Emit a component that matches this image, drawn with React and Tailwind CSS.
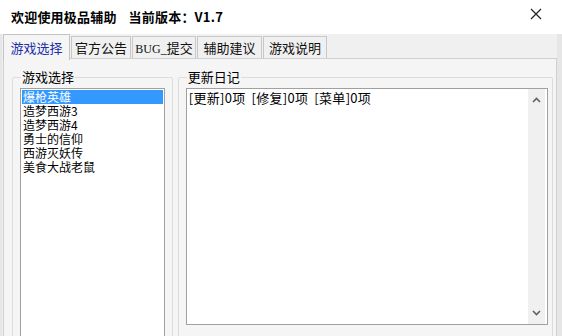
import React, { useState } from "react";

const tabs = ["游戏选择", "官方公告", "BUG_提交", "辅助建议", "游戏说明"];
const games = ["爆枪英雄", "造梦西游3", "造梦西游4", "勇士的信仰", "西游灭妖传", "美食大战老鼠"];

const App = () => {
  const [tab, setTab] = useState(0);
  const [game, setGame] = useState(0);

  return (
    <div
      className="w-[562px] h-[336px] overflow-hidden flex flex-col bg-white text-black"
      style={{ fontFamily: '"Noto Sans CJK SC", "Liberation Sans", sans-serif' }}
    >
      <div className="h-[34px] shrink-0 flex items-center pl-[11px] pr-[20px] bg-white">
        <div className="text-[13px] font-bold tracking-[0.2px] flex gap-[12px]">
          <span>欢迎使用极品辅助</span>
          <span>当前版本：V1.7</span>
        </div>
        <div className="ml-auto mt-[-6px]">
          <svg width="12" height="12" viewBox="0 0 12 12">
            <path d="M1 1 L11 11 M11 1 L1 11" stroke="#222" strokeWidth="1.2" />
          </svg>
        </div>
      </div>

      <div className="flex-1 flex flex-col bg-[#f0f0f0] border-l-[2px] border-r-[5px] border-[#e6e6e6] pl-[1px]">
        <div className="h-[24px] shrink-0 flex items-end relative z-10">
          {tabs.map((t, i) => (
            <div
              key={t}
              onClick={() => setTab(i)}
              className={
                i === tab
                  ? "h-[26px] mb-[-2px] px-[4px] flex items-center bg-[#f5f5f5] border border-b-0 border-[#c4c4c4] text-[13px] text-[#1a2fa8] w-[67px] justify-center"
                  : "h-[22px] ml-[1px] flex items-center justify-center bg-[#f0f0f0] border border-b-0 border-[#c8c8c8] text-[13px] text-[#111]"
              }
              style={i === tab ? {} : { width: [0, 60, 64, 65, 64][i] }}
            >
              {t === "BUG_提交" ? (
                <span>
                  <span style={{ fontFamily: '"Liberation Serif", serif' }} className="text-[12px]">
                    BUG_
                  </span>
                  提交
                </span>
              ) : (
                t
              )}
            </div>
          ))}
        </div>

        <div className="flex-1 border border-[#d0d0d0] bg-[#f5f5f5] flex pl-[8px] pr-[3px] pt-[9px] gap-[5px]">
          <fieldset className="w-[161px] border border-[#dcdcdc] rounded-[2px] px-[7px] h-[300px] mt-[2px]">
            <legend className="text-[13px] leading-[14px] px-[1px] ml-[1px]">游戏选择</legend>
            <div className="mt-[4px] h-[280px] bg-white border border-[#a0a0a0] p-[1px] text-[12px] leading-[14px]">
              {games.map((g, i) => (
                <div
                  key={g}
                  onClick={() => setGame(i)}
                  className={i === game ? "bg-[#3399ff] text-white pl-[1px] h-[14px]" : "pl-[1px] h-[14px]"}
                >
                  {g}
                </div>
              ))}
            </div>
          </fieldset>

          <fieldset className="w-[376px] border border-[#dcdcdc] rounded-[2px] pl-[7px] pr-[4px] h-[300px] mt-[2px]">
            <legend className="text-[13px] leading-[14px] px-[1px] ml-[1px]">更新日记</legend>
            <div className="mt-[4px] h-[237px] bg-white border border-[#a0a0a0] flex">
              <div className="flex-1 px-[2px] pt-[1px] text-[13px] leading-[15px] whitespace-nowrap tracking-[0.3px] flex gap-[6px]">
                <span>[更新]0项</span>
                <span>[修复]0项</span>
                <span>[菜单]0项</span>
              </div>
              <div className="w-[17px] bg-[#f0f0f0] flex flex-col items-center justify-between py-[8px] mr-[2px]">
                <svg width="9" height="6" viewBox="0 0 9 6">
                  <path d="M1 5 L4.5 1.5 L8 5" stroke="#606060" strokeWidth="1.6" fill="none" />
                </svg>
                <svg width="9" height="6" viewBox="0 0 9 6">
                  <path d="M1 1 L4.5 4.5 L8 1" stroke="#606060" strokeWidth="1.6" fill="none" />
                </svg>
              </div>
            </div>
          </fieldset>
        </div>
      </div>
    </div>
  );
};

export default App;
